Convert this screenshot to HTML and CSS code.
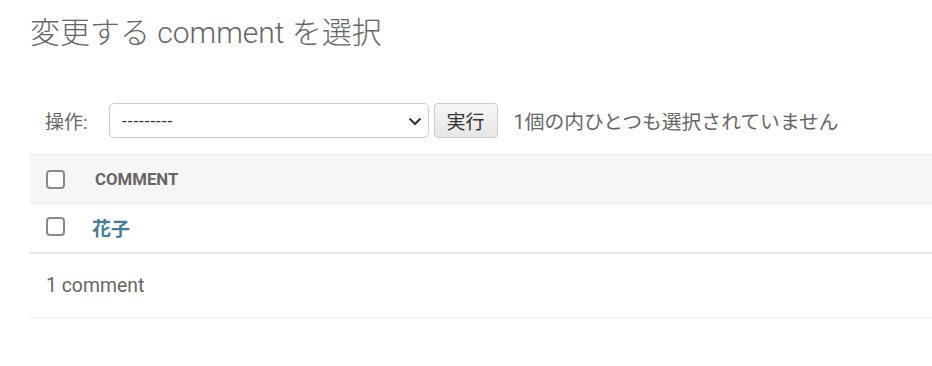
FILE: index.html
```html
<!DOCTYPE html>
<html>
<head>
	<title>変更する comment を選択</title>
	<meta charset="utf-8">
	<link rel="stylesheet" href="styles.css">
</head>
<body>
<div id="content">
	<h1>変更する comment を選択</h1>

	<div class="actions">
		<label class="action-label">操作:</label>
		<div class="select-box">
			<span>---------</span>
			<svg class="chevron" width="14" height="9" viewBox="0 0 14 9"><path d="M1.5 1.5 L7 7 L12.5 1.5" fill="none" stroke="#333" stroke-width="2"/></svg>
		</div>
		<button class="run">実行</button>
		<span class="counter">1個の内ひとつも選択されていません</span>
	</div>

	<table class="results">
		<thead>
			<tr>
				<th class="check-col"><span class="check"></span></th>
				<th class="name-col">COMMENT</th>
			</tr>
		</thead>
		<tbody>
			<tr>
				<td class="check-col"><span class="check"></span></td>
				<td class="name-col"><a href="#">花子</a></td>
			</tr>
		</tbody>
	</table>

	<p class="paginator">1 comment</p>
</div>
</body>
</html>
```

FILE: styles.css
```css
body {
	margin: 0;
	background: #fff;
	font-family: Roboto, "Noto Sans CJK JP", sans-serif;
	color: #333;
}
#content {
	padding: 10px 0 0 30px;
}
h1 {
	margin: 0;
	font-size: 30px;
	line-height: 46px;
	font-weight: 300;
	color: #666;
}
.actions {
	display: flex;
	align-items: center;
	padding: 0 15px;
	margin-top: 47px;
	height: 35px;
	margin-bottom: 16px;
	font-size: 19px;
}
.action-label {
	color: #666;
	margin-right: 21px;
}
.select-box {
	box-sizing: border-box;
	width: 320px;
	height: 35px;
	border: 1px solid #ccc;
	border-radius: 5px;
	display: flex;
	align-items: center;
	justify-content: space-between;
	padding: 0 6px 0 12px;
	font-family: "Liberation Sans", sans-serif;
	font-size: 17px;
	color: #333;
}
.chevron {
	margin-top: 1px;
}
.run {
	box-sizing: border-box;
	margin-left: 5px;
	height: 35px;
	width: 64px;
	border: 1px solid #ccc;
	border-radius: 4px;
	background: linear-gradient(#f6f6f6, #e6e6e6);
	font-family: "Noto Sans CJK JP", sans-serif;
	font-size: 19px;
	color: #333;
	padding: 0;
}
.counter {
	margin-left: 16px;
	color: #666;
	font-size: 19.8px;
}
.results {
	width: 100%;
	border-collapse: collapse;
}
.results th {
	background: #f6f6f6;
	border-top: 1px solid #eee;
	border-bottom: 1px solid #eee;
	height: 48px;
	text-align: left;
	font-size: 16.8px;
	font-weight: 700;
	color: #666;
	padding: 0;
}
.results td {
	height: 48px;
	border-bottom: 2px solid #e8e8e8;
	padding: 0;
}
.check-col {
	width: 62px;
	padding-left: 16px !important;
	box-sizing: border-box;
}
.name-col {
	vertical-align: middle;
}
.results th.name-col {
	padding-left: 3px;
}
.check {
	display: block;
	box-sizing: border-box;
	width: 19px;
	height: 19px;
	border: 2px solid #8a8a8a;
	border-radius: 4px;
	background: #fff;
}
.results td .check {
	margin-top: -3px;
}
.results a {
	color: #447e9b;
	font-weight: 700;
	font-size: 19px;
	text-decoration: none;
	font-family: "Noto Sans CJK JP", sans-serif;
	position: relative;
	top: -1px;
}
.paginator {
	margin: 0;
	height: 63px;
	line-height: 63px;
	padding-left: 16px;
	font-size: 19.4px;
	color: #666;
	border-bottom: 1px solid #eee;
}
```
